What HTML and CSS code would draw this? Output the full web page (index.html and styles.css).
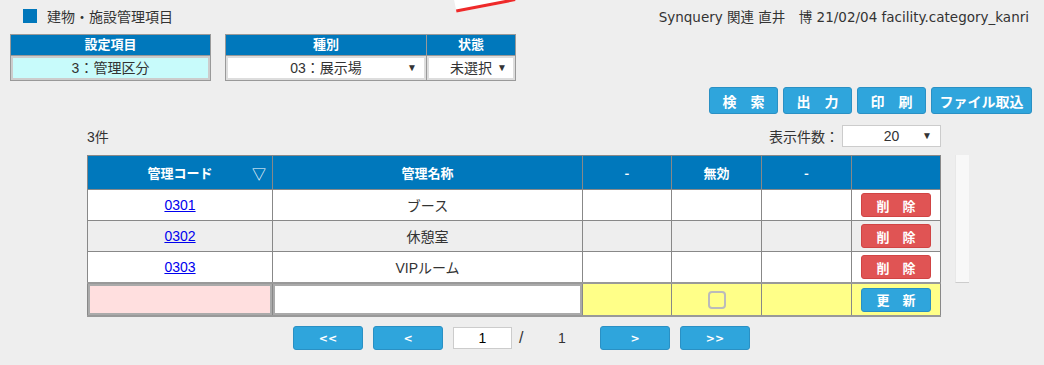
FILE: index.html
```html
<!DOCTYPE html>
<html lang="ja">
<head>
    <meta charset="UTF-8">
    <title>建物・施設管理項目</title>
    <link rel="stylesheet" href="styles.css">
</head>
<body>
    <div class="stamp"></div>

    <div class="page-head">
        <h1 class="page-title"><span class="title-mark"></span>建物・施設管理項目</h1>
        <div class="user-info">Synquery 関連 直井　博 21/02/04 facility.category_kanri</div>
    </div>

    <div class="cond-row">
        <div class="cond-box cond-item">
            <div class="cond-head">設定項目</div>
            <div class="cond-value">3：管理区分</div>
        </div>
        <div class="cond-box cond-kind">
            <div class="cond-col col-kind">
                <div class="cond-head">種別</div>
                <div class="cond-select">03：展示場<span class="arrow">▼</span></div>
            </div>
            <div class="cond-col col-state">
                <div class="cond-head">状態</div>
                <div class="cond-select">未選択<span class="arrow">▼</span></div>
            </div>
        </div>
    </div>

    <div class="toolbar">
        <button class="btn">検　索</button>
        <button class="btn">出　力</button>
        <button class="btn">印　刷</button>
        <button class="btn btn-wide">ファイル取込</button>
    </div>

    <div class="list-area">
        <div class="list-info">
            <span class="count">3件</span>
            <div class="per-page">
                <span>表示件数：</span>
                <div class="per-select">20<span class="arrow">▼</span></div>
            </div>
        </div>

        <div class="grid-wrap">
            <table class="grid">
                <colgroup>
                    <col class="c-code">
                    <col class="c-name">
                    <col class="c-x">
                    <col class="c-y">
                    <col class="c-y">
                    <col>
                </colgroup>
                <thead>
                    <tr>
                        <th>管理コード<span class="sort">▽</span></th>
                        <th>管理名称</th>
                        <th>-</th>
                        <th>無効</th>
                        <th>-</th>
                        <th></th>
                    </tr>
                </thead>
                <tbody>
                    <tr>
                        <td><a href="#">0301</a></td>
                        <td>ブース</td>
                        <td></td><td></td><td></td>
                        <td><button class="btn-del">削　除</button></td>
                    </tr>
                    <tr class="odd">
                        <td><a href="#">0302</a></td>
                        <td>休憩室</td>
                        <td></td><td></td><td></td>
                        <td><button class="btn-del">削　除</button></td>
                    </tr>
                    <tr>
                        <td><a href="#">0303</a></td>
                        <td>VIPルーム</td>
                        <td></td><td></td><td></td>
                        <td><button class="btn-del">削　除</button></td>
                    </tr>
                    <tr class="edit-row">
                        <td class="in-pink"></td>
                        <td class="in-white"></td>
                        <td class="in-yellow"></td>
                        <td class="in-yellow"><span class="check"></span></td>
                        <td class="in-yellow"></td>
                        <td class="yellow"><button class="btn-upd">更　新</button></td>
                    </tr>
                </tbody>
            </table>
            <div class="side-bar"></div>
        </div>

        <div class="pager">
            <button class="btn pg">&lt;&lt;</button>
            <button class="btn pg">&lt;</button>
            <div class="pg-input">1</div>
            <span class="pg-slash">/</span>
            <span class="pg-total">1</span>
            <button class="btn pg">&gt;</button>
            <button class="btn pg">&gt;&gt;</button>
        </div>
    </div>
</body>
</html>
```

FILE: styles.css
```css
body {
    margin: 0;
    background-color: #eeeeee;
    font-family: "Liberation Sans", "Noto Sans CJK JP", sans-serif;
    font-size: 14px;
    color: #333;
    position: relative;
}

.stamp {
    position: absolute;
    left: 454px;
    top: -14px;
    width: 60px;
    height: 18px;
    background: #fff;
    border-bottom: 3px solid #ee2a2a;
    transform: rotate(-11deg);
}

.page-head {
    display: flex;
    justify-content: space-between;
    align-items: center;
    height: 32px;
    padding: 0 15px 0 23px;
}

.page-title {
    margin: 0;
    display: flex;
    align-items: center;
    font-size: 14px;
    font-weight: normal;
    font-family: "Noto Sans CJK JP", sans-serif;
    color: #333;
}

.title-mark {
    width: 14px;
    height: 14px;
    background: #0077bb;
    margin-right: 10px;
}

.user-info {
    font-family: "DejaVu Sans", "Noto Sans CJK JP", sans-serif;
    font-size: 13.5px;
    color: #333;
}

.cond-row {
    display: flex;
    gap: 14px;
    padding-left: 10px;
    margin-top: 2px;
}

.cond-box {
    border: 1px solid #999;
    background: #fff;
}

.cond-item {
    width: 199px;
}

.cond-kind {
    width: 289px;
    display: flex;
}

.col-kind {
    width: 200px;
    border-right: 1px solid #999;
}

.col-state {
    flex: 1;
}

.cond-head {
    background: #0078bc;
    color: #fff;
    font-weight: bold;
    font-size: 13px;
    text-align: center;
    height: 20px;
    line-height: 20px;
    border-bottom: 1px solid #999;
}

.cond-value {
    background: #c8fbfb;
    border: 2px solid #ccc;
    height: 20px;
    line-height: 20px;
    text-align: center;
    font-size: 14px;
}

.cond-select {
    position: relative;
    border: 2px solid #ddd;
    height: 20px;
    line-height: 20px;
    text-align: center;
    font-size: 14px;
}

.cond-select .arrow {
    position: absolute;
    right: 7px;
    top: 0;
    font-size: 10px;
}

.col-state .cond-select .arrow {
    right: 6px;
}

.toolbar {
    display: flex;
    justify-content: flex-end;
    gap: 5px;
    padding-right: 12px;
    margin-top: 6px;
}

.btn {
    height: 27px;
    width: 69px;
    padding: 0;
    margin: 0;
    background: #2fa5dc;
    border: 1px solid #2a90c4;
    border-radius: 3px;
    color: #fff;
    font-weight: bold;
    font-size: 14px;
    font-family: "Noto Sans CJK JP", sans-serif;
    cursor: pointer;
}

.btn-wide {
    width: 101px;
}

.list-area {
    padding-left: 87px;
}

.list-info {
    width: 854px;
    display: flex;
    justify-content: space-between;
    align-items: center;
    margin-top: 10px;
    height: 24px;
}

.count {
    font-size: 14px;
}

.per-page {
    display: flex;
    align-items: center;
    font-size: 14px;
}

.per-select {
    position: relative;
    width: 97px;
    height: 20px;
    line-height: 20px;
    margin-left: 3px;
    background: #fff;
    border: 1px solid #ccc;
    text-align: center;
    font-size: 14px;
}

.per-select .arrow {
    position: absolute;
    right: 8px;
    font-size: 10px;
}

.grid-wrap {
    display: flex;
    align-items: flex-start;
    margin-top: 7px;
}

.grid {
    width: 854px;
    border-collapse: collapse;
    border: 1px solid #999;
    background: #fff;
    table-layout: fixed;
}

.grid .c-code { width: 185px; }
.grid .c-name { width: 310px; }
.grid .c-x { width: 89px; }
.grid .c-y { width: 90px; }

.grid th {
    background: #0078bc;
    color: #fff;
    font-weight: bold;
    font-size: 13px;
    font-family: "Noto Sans CJK JP", sans-serif;
    height: 33px;
    border: 1px solid #888;
    position: relative;
    padding: 0;
}

.sort {
    position: absolute;
    right: 6px;
    top: 7px;
    font-size: 14px;
    font-weight: normal;
}

.grid td {
    border: 1px solid #888;
    height: 30px;
    text-align: center;
    padding: 0;
    font-size: 14px;
}

.grid tr.odd td {
    background: #eeeeee;
}

.grid a {
    color: #0000ee;
}

.btn-del,
.btn-upd {
    width: 70px;
    height: 24px;
    border-radius: 3px;
    color: #fff;
    font-weight: bold;
    font-size: 13px;
    font-family: "Noto Sans CJK JP", sans-serif;
    vertical-align: middle;
    cursor: pointer;
}

.btn-del {
    background: #e05454;
    border: 1px solid #d04444;
}

.btn-upd {
    background: #2fa5dc;
    border: 1px solid #2a90c4;
}

.grid tr.edit-row td {
    height: 31px;
    border-top: 2px solid #999;
    border-bottom: 2px solid #999;
}

.grid td.in-pink {
    background: #ffdfdf;
    box-shadow: inset 0 0 0 2px #aaa;
}

.grid td.in-white {
    background: #fff;
    box-shadow: inset 0 0 0 2px #aaa;
}

.grid td.in-yellow,
.grid td.yellow {
    background: #ffff88;
}

.check {
    display: inline-block;
    width: 14px;
    height: 14px;
    border: 2px solid #bbb;
    border-radius: 4px;
    vertical-align: middle;
}

.side-bar {
    width: 13px;
    height: 127px;
    margin-left: 14px;
    background: #f8f8f8;
    border-left: 1px solid #e8e8e8;
    border-bottom: 1px solid #ccc;
}

.pager {
    display: flex;
    align-items: center;
    margin-left: 206px;
    margin-top: 9px;
}

.btn.pg {
    width: 70px;
    height: 24px;
    margin-right: 10px;
    font-family: "DejaVu Sans", sans-serif;
    font-size: 11px;
}

.pg-input {
    width: 57px;
    height: 20px;
    line-height: 20px;
    background: #fff;
    border: 1px solid #ccc;
    text-align: center;
    font-size: 14px;
    color: #000;
    margin-right: 7px;
}

.pg-slash {
    font-size: 16px;
    width: 39px;
}

.pg-total {
    width: 42px;
    font-size: 14px;
}
```
